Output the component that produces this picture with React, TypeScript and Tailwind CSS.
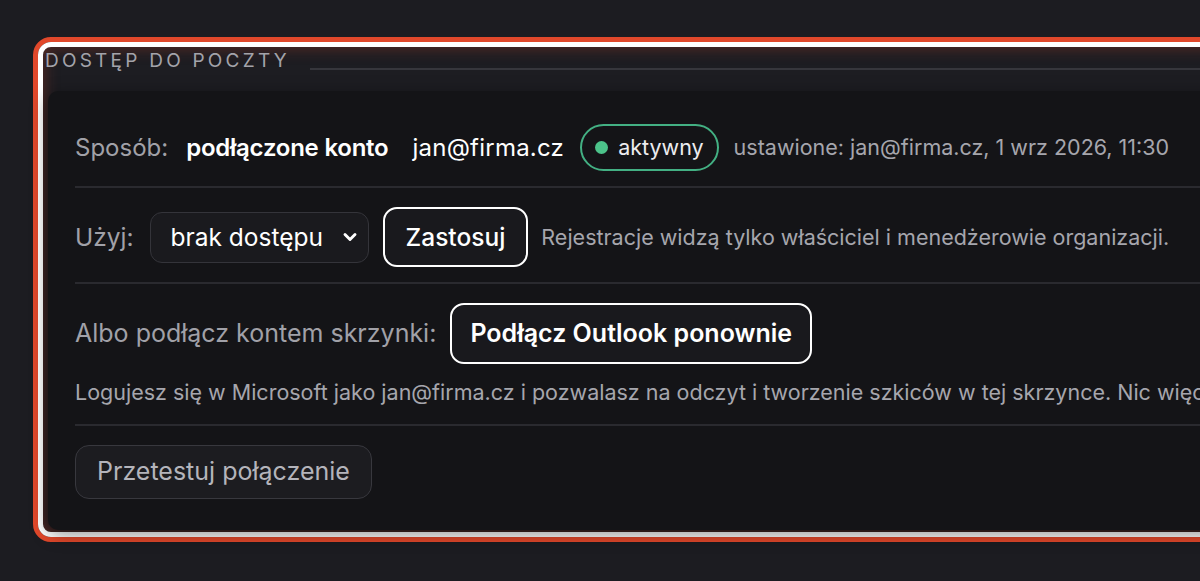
import { ChevronDown } from 'lucide-react';

function Divider() {
  return <div className="h-[2px] bg-[#2a2a2f]" />;
}

export default function App() {
  return (
    <div className="w-[1200px] h-[581px] overflow-hidden bg-[#1c1c21] font-['Inter',sans-serif]">
      <div className="w-[1340px] pt-[37px] pl-[33px]">
        {/* Podświetlenie sekcji */}
        <div className="rounded-[18px] border-[5px] border-[#e1482b]">
          <div className="rounded-[13px] border-[5px] border-white bg-[#1d1d22] shadow-[inset_0_0_16px_rgba(225,72,43,0.35)]">
            {/* Legenda */}
            <div className="flex items-end pt-[2px] pl-[2px]">
              <span className="text-[19px] leading-[24px] tracking-[0.17em] text-[#a3a3aa] uppercase">Dostęp do poczty</span>
              <div className="flex-1 h-[2px] ml-[20px] mb-[3px] bg-[#36363c]" />
            </div>

            {/* Karta */}
            <div className="mt-[18px] ml-[5px] mb-[2px] rounded-[10px] bg-[#141417] shadow-[0_4px_18px_rgba(0,0,0,0.45)] pl-[27px] pt-[33px] pb-[31px] flex flex-col">
              {/* Sposób */}
              <div className="flex items-center h-[47px] whitespace-nowrap">
                <span className="text-[24px] text-[#a1a1a8]">Sposób:</span>
                <span className="ml-[18px] text-[24px] font-semibold tracking-[-0.01em] text-white">podłączone konto</span>
                <span className="ml-[24px] text-[24px] tracking-[0.01em] text-white">jan@firma.cz</span>
                <span className="ml-[16px] h-[47px] flex items-center pl-[13px] pr-[13px] rounded-full border-2 border-[#43b083]">
                  <span className="w-[13px] h-[13px] rounded-full bg-[#4cc38a]" />
                  <span className="ml-[10px] text-[21.5px] text-[#ececef]">aktywny</span>
                </span>
                <span className="ml-[15px] text-[21.5px] text-[#a6a6ad]">ustawione: jan@firma.cz, 1 wrz 2026, 11:30</span>
              </div>
              <div className="mt-[15px]"><Divider /></div>

              {/* Użyj */}
              <div className="mt-[19px] flex items-center h-[60px] whitespace-nowrap">
                <span className="text-[24.5px] text-[#a1a1a8]">Użyj:</span>
                <div className="ml-[16px] w-[219px] h-[51px] flex items-center justify-between pl-[20px] pr-[8px] rounded-[12px] border-[1.5px] border-[#34343a] bg-[#1a1a1e]">
                  <span className="text-[24.5px] text-white">brak dostępu</span>
                  <ChevronDown className="w-[20px] h-[20px] text-white" strokeWidth={3.5} />
                </div>
                <button className="ml-[14px] h-[60px] px-[21px] rounded-[14px] border-2 border-white bg-[#19191d] text-[24.5px] font-medium text-white">Zastosuj</button>
                <span className="ml-[13px] text-[21.5px] text-[#a6a6ad]">Rejestracje widzą tylko właściciel i menedżerowie organizacji.</span>
              </div>
              <div className="mt-[15px]"><Divider /></div>

              {/* Podłącz */}
              <div className="mt-[19px] flex items-center h-[61px] whitespace-nowrap">
                <span className="text-[25px] text-[#a1a1a8]">Albo podłącz kontem skrzynki:</span>
                <button className="ml-[14px] h-[61px] px-[18px] rounded-[14px] border-2 border-white bg-[#19191d] text-[25px] font-semibold text-white">Podłącz Outlook ponownie</button>
              </div>
              <p className="mt-[16px] text-[21.5px] leading-[24px] text-[#a6a6ad] whitespace-nowrap">
                Logujesz się w Microsoft jako jan@firma.cz i pozwalasz na odczyt i tworzenie szkiców w tej skrzynce. Nic więcej.
              </p>
              <div className="mt-[20px]"><Divider /></div>

              {/* Test */}
              <div className="mt-[19px] flex">
                <button className="h-[54px] px-[21px] rounded-[14px] border-[1.5px] border-[#38383e] bg-[#1c1c20] text-[25px] text-[#b4b4bb]">Przetestuj połączenie</button>
              </div>
            </div>
          </div>
        </div>
      </div>
    </div>
  );
}
